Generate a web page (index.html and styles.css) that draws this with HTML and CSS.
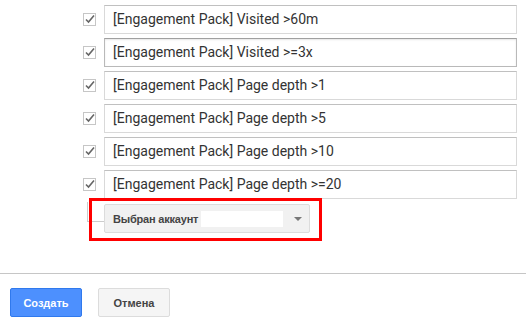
FILE: index.html
```html
<!DOCTYPE html>
<html lang="ru">
<head>
    <meta charset="UTF-8">
    <title>Сегменты</title>
    <link rel="stylesheet" href="styles.css">
</head>
<body>
    <div class="list">
        <div class="row">
            <span class="check"><svg width="15" height="15" viewBox="0 0 15 15"><rect x="0.5" y="1.5" width="12" height="12" fill="#fff" stroke="#c6c6c6"/><path d="M3 7.5 L5.5 10 L11 3.5" fill="none" stroke="#666" stroke-width="1.6"/></svg></span>
            <div class="field">[Engagement Pack] Visited &gt;60m</div>
        </div>
        <div class="row">
            <span class="check"><svg width="15" height="15" viewBox="0 0 15 15"><rect x="0.5" y="1.5" width="12" height="12" fill="#fff" stroke="#c6c6c6"/><path d="M3 7.5 L5.5 10 L11 3.5" fill="none" stroke="#666" stroke-width="1.6"/></svg></span>
            <div class="field hover">[Engagement Pack] Visited &gt;=3x</div>
        </div>
        <div class="row">
            <span class="check"><svg width="15" height="15" viewBox="0 0 15 15"><rect x="0.5" y="1.5" width="12" height="12" fill="#fff" stroke="#c6c6c6"/><path d="M3 7.5 L5.5 10 L11 3.5" fill="none" stroke="#666" stroke-width="1.6"/></svg></span>
            <div class="field">[Engagement Pack] Page depth &gt;1</div>
        </div>
        <div class="row">
            <span class="check"><svg width="15" height="15" viewBox="0 0 15 15"><rect x="0.5" y="1.5" width="12" height="12" fill="#fff" stroke="#c6c6c6"/><path d="M3 7.5 L5.5 10 L11 3.5" fill="none" stroke="#666" stroke-width="1.6"/></svg></span>
            <div class="field">[Engagement Pack] Page depth &gt;5</div>
        </div>
        <div class="row">
            <span class="check"><svg width="15" height="15" viewBox="0 0 15 15"><rect x="0.5" y="1.5" width="12" height="12" fill="#fff" stroke="#c6c6c6"/><path d="M3 7.5 L5.5 10 L11 3.5" fill="none" stroke="#666" stroke-width="1.6"/></svg></span>
            <div class="field">[Engagement Pack] Page depth &gt;10</div>
        </div>
        <div class="row">
            <span class="check"><svg width="15" height="15" viewBox="0 0 15 15"><rect x="0.5" y="1.5" width="12" height="12" fill="#fff" stroke="#c6c6c6"/><path d="M3 7.5 L5.5 10 L11 3.5" fill="none" stroke="#666" stroke-width="1.6"/></svg></span>
            <div class="field">[Engagement Pack] Page depth &gt;=20</div>
        </div>
        <div class="account-row">
            <span class="tree"></span>
            <div class="select">
                <span class="select-label">Выбран аккаунт</span>
                <span class="select-value"></span>
                <span class="select-arrow"></span>
            </div>
            <span class="highlight"></span>
        </div>
    </div>
    <div class="footer">
        <button class="btn btn-primary">Создать</button>
        <button class="btn">Отмена</button>
    </div>
</body>
</html>
```

FILE: styles.css
```css
*{
    margin: 0;
    padding: 0;
    box-sizing: border-box;
}
body{
    background: #fff;
    font-family: Roboto, "Liberation Sans", sans-serif;
    color: #333;
}
.list{
    padding: 5px 0 0 83px;
    display: flex;
    flex-direction: column;
    gap: 4px;
}
.row{
    display: flex;
    align-items: center;
    gap: 6px;
}
.check{
    width: 15px;
    height: 15px;
    display: flex;
}
.field{
    width: 413px;
    height: 29px;
    border: 1px solid #d9d9d9;
    border-top-color: #c0c0c0;
    padding: 0 8px;
    font-size: 14px;
    line-height: 27px;
    color: #333;
}
.field.hover{
    border-color: #b9b9b9;
    border-top-color: #a0a0a0;
    box-shadow: inset 0 1px 2px rgba(0,0,0,0.1);
}
.account-row{
    position: relative;
    display: flex;
    align-items: center;
    margin-top: 1px;
    height: 29px;
}
.tree{
    width: 17px;
    height: 20px;
    margin-left: 4px;
    align-self: flex-start;
    margin-top: -2px;
    border-left: 1px solid #ccc;
    border-bottom: 1px solid #ccc;
}
.select{
    width: 206px;
    height: 29px;
    background: #f1f1f1;
    border: 1px solid #dcdcdc;
    border-radius: 2px;
    display: flex;
    align-items: center;
    padding: 0 0 0 8px;
    font-family: "Liberation Sans", Arial, sans-serif;
}
.select-label{
    flex-shrink: 0;
    white-space: nowrap;
    font-size: 11px;
    font-weight: bold;
    letter-spacing: -0.2px;
    color: #444;
    margin-right: 3px;
}
.select-value{
    flex-shrink: 0;
    width: 82px;
    height: 16px;
    background: #fff;
}
.select-arrow{
    flex-shrink: 0;
    margin-left: 11px;
    width: 0;
    height: 0;
    border-left: 4px solid transparent;
    border-right: 4px solid transparent;
    border-top: 4px solid #777;
}
.highlight{
    position: absolute;
    left: 6px;
    top: -6px;
    width: 233px;
    height: 43px;
    border: 3px solid #f00;
}
.footer{
    margin-top: 40px;
    border-top: 1px solid #c6c6c6;
    padding: 14px 10px 0;
    display: flex;
    gap: 16px;
}
.btn{
    width: 72px;
    height: 29px;
    border: 1px solid #dcdcdc;
    border-radius: 2px;
    background: #f5f5f5;
    color: #444;
    font-family: "Liberation Sans", Arial, sans-serif;
    font-size: 11px;
    font-weight: bold;
}
.btn-primary{
    background: #4d90fe;
    border-color: #3079ed;
    color: #fff;
}
```
